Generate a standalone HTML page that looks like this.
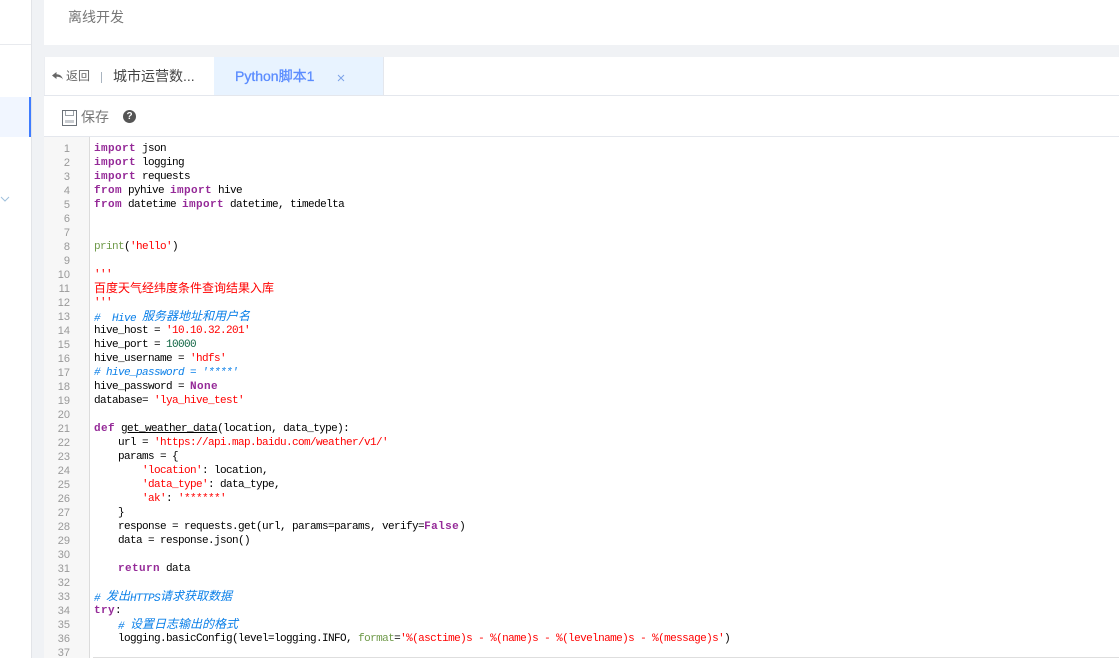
<!DOCTYPE html>
<html lang="zh">
<head>
<meta charset="utf-8">
<style>
html,body{margin:0;padding:0;background:#fff;}
body{width:1119px;height:658px;overflow:hidden;position:relative;font-family:"Liberation Sans","Noto Sans CJK SC",sans-serif;}
.a{position:absolute;}
.ln{position:absolute;left:44px;width:26px;text-align:right;font:11px/14px "Liberation Sans",sans-serif;color:#999;height:14px;margin-top:1px;}
.c{position:absolute;left:94px;height:14px;white-space:pre;font:11px/14px "Liberation Mono","Noto Sans CJK SC",monospace;letter-spacing:-.6px;color:#000;margin-top:1px;}
.k{color:#952a98;font-weight:bold;letter-spacing:.4px;}
.s{color:#f00;}
.m{color:#0a7fe8;font-style:italic;}
.n{color:#116644;}
.b{color:#6f9a4a;}
.z{font-family:"Noto Sans CJK SC",sans-serif;font-size:12px;letter-spacing:0;}
span.z{position:relative;top:-1px;}
div.z{margin-top:0;}
</style>
</head>
<body>
<div class="a" style="left:31px;top:0;width:13px;height:658px;background:#f0f2f5;"></div>
<div class="a" style="left:31px;top:0;width:1px;height:658px;background:#e2e4e8;"></div>
<div class="a" style="left:0;top:44px;width:31px;height:1px;background:#e8eaee;"></div>
<div class="a" style="left:0;top:97px;width:29px;height:40px;background:#f1f6ff;"></div>
<div class="a" style="left:29px;top:97px;width:2px;height:40px;background:#3f7cff;"></div>
<svg class="a" style="left:0;top:195px" width="10" height="8"><path d="M1 2l4 4 4-4" fill="none" stroke="#9fc0dc" stroke-width="1"/></svg>

<div class="a" style="left:44px;top:45px;width:1075px;height:12px;background:#f0f2f5;"></div>
<div class="a" style="left:68px;top:7px;font-size:14px;line-height:20px;color:#777;">离线开发</div>

<div class="a" style="left:44px;top:95px;width:1075px;height:1px;background:#e4e7ed;"></div>
<div class="a" style="left:44px;top:57px;width:1px;height:38px;background:#eceef2;"></div>
<div class="a" style="left:214px;top:57px;width:169px;height:38px;background:#e8f3ff;"></div>
<div class="a" style="left:383px;top:57px;width:1px;height:38px;background:#e4e7ed;"></div>
<svg class="a" style="left:52px;top:71px" width="12" height="10"><path d="M0 4.500L4.500 1v2.200C8 3.200 10 5 11 8.500 9.500 6.500 7.500 5.800 4.500 5.800V8z" fill="#666"/></svg>
<div class="a" style="left:66px;top:67px;font-size:12px;line-height:18px;color:#666;">返回</div>
<div class="a" style="left:101px;top:72px;width:1px;height:11px;background:#a9b4c0;"></div>
<div class="a" style="left:113px;top:66px;font-size:14px;line-height:20px;color:#444;">城市运营数...</div>
<div class="a" style="left:235px;top:66px;font-size:14px;line-height:20px;color:#5b8cff;-webkit-text-stroke:.3px #5b8cff;">Python脚本1</div>
<svg class="a" style="left:337px;top:74px" width="8" height="8"><path d="M1 1l6 6M7 1L1 7" stroke="#7da2e8" stroke-width="1" fill="none"/></svg>

<svg class="a" style="left:62px;top:110px" width="15" height="16"><rect x=".5" y=".5" width="14" height="15" fill="none" stroke="#6b7178"/><path d="M3.500 1v4.500h8V1" fill="none" stroke="#9aa0a6"/><path d="M3 10h9v3H3z" fill="#c9ccd0"/></svg>
<div class="a" style="left:81px;top:108px;font-size:14px;line-height:19px;color:#777;">保存</div>
<div class="a" style="left:123px;top:110px;width:13px;height:13px;border-radius:50%;background:#555;color:#fff;font:bold 10px/13px 'Liberation Sans',sans-serif;text-align:center;">?</div>
<div class="a" style="left:44px;top:136px;width:1075px;height:1px;background:#e4e7ed;"></div>

<div class="a" style="left:44px;top:137px;width:45px;height:521px;background:#f7f7f7;"></div>
<div class="a" style="left:89px;top:137px;width:1px;height:521px;background:#dcdcdc;"></div>
<div class="a" style="left:93px;top:657px;width:1026px;height:1px;background:#dedede;"></div>

<div class="ln" style="top:141px">1</div><div class="ln" style="top:155px">2</div><div class="ln" style="top:169px">3</div><div class="ln" style="top:183px">4</div><div class="ln" style="top:197px">5</div><div class="ln" style="top:211px">6</div><div class="ln" style="top:225px">7</div><div class="ln" style="top:239px">8</div><div class="ln" style="top:253px">9</div><div class="ln" style="top:267px">10</div><div class="ln" style="top:281px">11</div><div class="ln" style="top:295px">12</div><div class="ln" style="top:309px">13</div><div class="ln" style="top:323px">14</div><div class="ln" style="top:337px">15</div><div class="ln" style="top:351px">16</div><div class="ln" style="top:365px">17</div><div class="ln" style="top:379px">18</div><div class="ln" style="top:393px">19</div><div class="ln" style="top:407px">20</div><div class="ln" style="top:421px">21</div><div class="ln" style="top:435px">22</div><div class="ln" style="top:449px">23</div><div class="ln" style="top:463px">24</div><div class="ln" style="top:477px">25</div><div class="ln" style="top:491px">26</div><div class="ln" style="top:505px">27</div><div class="ln" style="top:519px">28</div><div class="ln" style="top:533px">29</div><div class="ln" style="top:547px">30</div><div class="ln" style="top:561px">31</div><div class="ln" style="top:575px">32</div><div class="ln" style="top:589px">33</div><div class="ln" style="top:603px">34</div><div class="ln" style="top:617px">35</div><div class="ln" style="top:631px">36</div><div class="ln" style="top:645px">37</div>

<div class="c" style="top:141px"><span class="k">import</span> json</div>
<div class="c" style="top:155px"><span class="k">import</span> logging</div>
<div class="c" style="top:169px"><span class="k">import</span> requests</div>
<div class="c" style="top:183px"><span class="k">from</span> pyhive <span class="k">import</span> hive</div>
<div class="c" style="top:197px"><span class="k">from</span> datetime <span class="k">import</span> datetime, timedelta</div>
<div class="c" style="top:239px"><span class="b">print</span>(<span class="s">'hello'</span>)</div>
<div class="c s" style="top:267px">'''</div>
<div class="c s z" style="top:281px">百度天气经纬度条件查询结果入库</div>
<div class="c s" style="top:295px">'''</div>
<div class="c m" style="top:309px">#  Hive <span class="z">服务器地址和用户名</span></div>
<div class="c" style="top:323px">hive_host = <span class="s">'10.10.32.201'</span></div>
<div class="c" style="top:337px">hive_port = <span class="n">10000</span></div>
<div class="c" style="top:351px">hive_username = <span class="s">'hdfs'</span></div>
<div class="c m" style="top:365px"># hive_password = '****'</div>
<div class="c" style="top:379px">hive_password = <span class="k">None</span></div>
<div class="c" style="top:393px">database= <span class="s">'lya_hive_test'</span></div>
<div class="c" style="top:421px"><span class="k">def</span> <span style="text-decoration:underline">get_weather_data</span>(location, data_type):</div>
<div class="c" style="top:435px">    url = <span class="s">'https://api.map.baidu.com/weather/v1/'</span></div>
<div class="c" style="top:449px">    params = {</div>
<div class="c" style="top:463px">        <span class="s">'location'</span>: location,</div>
<div class="c" style="top:477px">        <span class="s">'data_type'</span>: data_type,</div>
<div class="c" style="top:491px">        <span class="s">'ak'</span>: <span class="s">'******'</span></div>
<div class="c" style="top:505px">    }</div>
<div class="c" style="top:519px">    response = requests.get(url, params=params, verify=<span class="k">False</span>)</div>
<div class="c" style="top:533px">    data = response.json()</div>
<div class="c" style="top:561px">    <span class="k">return</span> data</div>
<div class="c m" style="top:589px"># <span class="z">发出</span>HTTPS<span class="z">请求获取数据</span></div>
<div class="c" style="top:603px"><span class="k">try</span>:</div>
<div class="c m" style="top:617px">    # <span class="z">设置日志输出的格式</span></div>
<div class="c" style="top:631px">    logging.basicConfig(level=logging.INFO, <span class="b">format</span>=<span class="s">'%(asctime)s - %(name)s - %(levelname)s - %(message)s'</span>)</div>
</body>
</html>
